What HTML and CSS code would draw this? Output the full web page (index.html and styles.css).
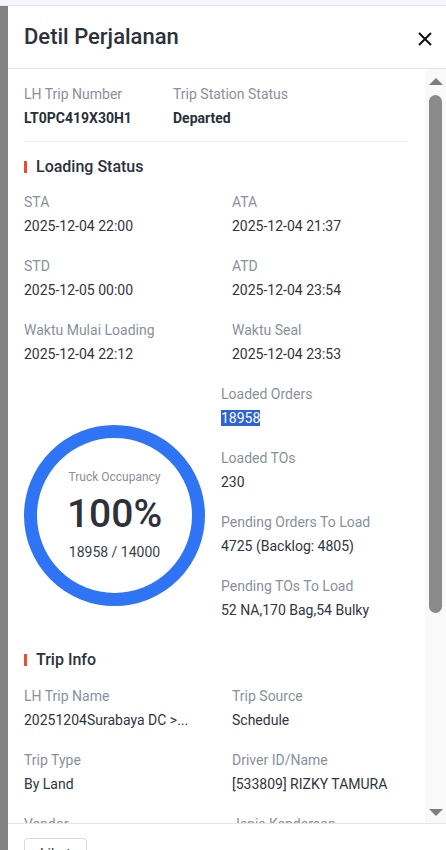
FILE: index.html
```html
<!DOCTYPE html>
<html lang="id">
<head>
<meta charset="utf-8">
<title>Detil Perjalanan</title>
<link rel="stylesheet" href="styles.css">
</head>
<body>
<div class="page">
  <div class="topstrip"></div>
  <div class="main">
    <div class="mask"></div>
    <aside class="drawer">
      <header class="drawer-header">
        <h1 class="drawer-title">Detil Perjalanan</h1>
        <button class="close" aria-label="Tutup">
          <svg width="14" height="14" viewBox="0 0 14 14"><path d="M1 1L13 13M13 1L1 13" stroke="#111" stroke-width="2" stroke-linecap="butt"/></svg>
        </button>
      </header>
      <div class="drawer-body">
        <div class="content">
          <div class="top-row">
            <div class="top-item first">
              <div class="label">LH Trip Number</div>
              <div class="value strong">LT0PC419X30H1</div>
            </div>
            <div class="top-item">
              <div class="label">Trip Station Status</div>
              <div class="value strong">Departed</div>
            </div>
          </div>
          <div class="divider"></div>

          <h2 class="section-title">Loading Status</h2>
          <div class="grid">
            <div class="field"><div class="label">STA</div><div class="value">2025-12-04 22:00</div></div>
            <div class="field"><div class="label">ATA</div><div class="value">2025-12-04 21:37</div></div>
            <div class="field"><div class="label">STD</div><div class="value">2025-12-05 00:00</div></div>
            <div class="field"><div class="label">ATD</div><div class="value">2025-12-04 23:54</div></div>
            <div class="field"><div class="label">Waktu Mulai Loading</div><div class="value">2025-12-04 22:12</div></div>
            <div class="field"><div class="label">Waktu Seal</div><div class="value">2025-12-04 23:53</div></div>
          </div>

          <div class="occupancy">
            <div class="gauge-wrap">
              <div class="gauge">
                <div class="gauge-label">Truck Occupancy</div>
                <div class="gauge-pct">100%</div>
                <div class="gauge-count">18958 / 14000</div>
              </div>
            </div>
            <div class="occ-list">
              <div class="field"><div class="label">Loaded Orders</div><div class="value"><span class="selected">18958</span></div></div>
              <div class="field"><div class="label">Loaded TOs</div><div class="value">230</div></div>
              <div class="field"><div class="label">Pending Orders To Load</div><div class="value">4725 (Backlog: 4805)</div></div>
              <div class="field"><div class="label">Pending TOs To Load</div><div class="value">52 NA,170 Bag,54 Bulky</div></div>
            </div>
          </div>

          <h2 class="section-title second">Trip Info</h2>
          <div class="grid">
            <div class="field"><div class="label">LH Trip Name</div><div class="value">20251204Surabaya DC &gt;...</div></div>
            <div class="field"><div class="label">Trip Source</div><div class="value">Schedule</div></div>
            <div class="field"><div class="label">Trip Type</div><div class="value">By Land</div></div>
            <div class="field"><div class="label">Driver ID/Name</div><div class="value">[533809] RIZKY TAMURA</div></div>
            <div class="field"><div class="label">Vendor</div><div class="value">-</div></div>
            <div class="field"><div class="label">Jenis Kendaraan</div><div class="value">-</div></div>
          </div>
        </div>
        <div class="scrollbar">
          <span class="arrow up"></span>
          <span class="thumb"></span>
          <span class="arrow down"></span>
        </div>
      </div>
      <footer class="drawer-footer">
        <button class="btn">Lihat</button>
      </footer>
    </aside>
  </div>
</div>
</body>
</html>
```

FILE: styles.css
```css
* { box-sizing: border-box; }

html, body {
  margin: 0;
  padding: 0;
  width: 446px;
  height: 850px;
  overflow: hidden;
  background: #ffffff;
  font-family: Roboto, "Noto Sans", "Liberation Sans", sans-serif;
}

.page {
  width: 446px;
  height: 850px;
  display: flex;
  flex-direction: column;
  overflow: hidden;
}

.topstrip {
  flex: none;
  height: 6px;
  background: #f5f5fb;
  border-bottom: 1px solid #e6e6ee;
}

.main {
  flex: 1;
  display: flex;
  min-height: 0;
}

.mask {
  flex: none;
  width: 8px;
  background: #838383;
}

.drawer {
  flex: 1;
  display: flex;
  flex-direction: column;
  background: #ffffff;
  min-width: 0;
}

.drawer-header {
  flex: none;
  height: 63px;
  border-bottom: 1px solid #e4e6ee;
  display: flex;
  align-items: center;
  justify-content: space-between;
  padding: 0 14px 0 16px;
}

.drawer-title {
  margin: 0;
  font-size: 22px;
  font-weight: 500;
  color: #2c313b;
  line-height: 30px;
}

.close {
  border: 0;
  background: transparent;
  padding: 0;
  width: 14px;
  height: 14px;
  margin-top: 4px;
  display: flex;
}

.drawer-body {
  flex: none;
  height: 754px;
  display: flex;
}

.content {
  flex: 1;
  min-width: 0;
  overflow: hidden;
  padding: 14px 17px 0 16px;
}

.scrollbar {
  flex: none;
  width: 21px;
  background: #f9f9f9;
  display: flex;
  flex-direction: column;
  align-items: center;
  padding: 9px 0 7px 0;
}

.arrow {
  width: 0;
  height: 0;
  border-left: 7px solid transparent;
  border-right: 7px solid transparent;
}

.arrow.up { border-bottom: 7px solid #7d7d7d; }
.arrow.down { border-top: 7px solid #7d7d7d; margin-top: auto; }

.thumb {
  margin-top: 10px;
  width: 13px;
  height: 518px;
  border-radius: 7px;
  background: #8a8a8a;
}

.label {
  font-size: 14px;
  line-height: 22px;
  color: #8a909b;
  white-space: nowrap;
}

.value {
  font-size: 14px;
  line-height: 22px;
  margin-top: 2px;
  color: #30353f;
  white-space: nowrap;
}

.value.strong {
  font-size: 14px;
  font-weight: 700;
  color: #2a2f38;
}

.top-row {
  display: flex;
}

.top-item.first {
  width: 149px;
}

.divider {
  height: 1px;
  background: #ececec;
  margin-top: 12px;
}

.section-title {
  margin: 13px 0 12px 0;
  font-size: 16px;
  line-height: 24px;
  font-weight: 500;
  color: #2c313b;
  display: flex;
  align-items: center;
  gap: 9px;
}

.section-title::before {
  content: "";
  width: 3px;
  height: 12px;
  background: #ee4d2d;
}

.section-title.second {
  margin-top: 9px;
  margin-bottom: 13px;
}

.grid {
  display: grid;
  grid-template-columns: 208px 1fr;
}

.field {
  padding-bottom: 18px;
}

.occupancy {
  display: flex;
}

.gauge-wrap {
  flex: none;
  width: 197px;
  padding-top: 42px;
}

.gauge {
  width: 181px;
  height: 181px;
  border-radius: 50%;
  border: 13px solid #2f74f4;
  display: flex;
  flex-direction: column;
  align-items: center;
  justify-content: center;
}

.gauge-label {
  font-size: 12px;
  line-height: 16px;
  color: #8a909b;
}

.gauge-pct {
  margin-top: 7px;
  font-size: 39px;
  font-weight: 500;
  line-height: 44px;
  color: #2c313b;
}

.gauge-count {
  margin-top: 5px;
  font-size: 14px;
  line-height: 22px;
  color: #3a3f48;
}

.occ-list {
  flex: 1;
  min-width: 0;
}

.selected {
  background: #2f63d4;
  color: #ffffff;
}

.drawer-footer {
  flex: none;
  height: 80px;
  border-top: 1px solid #e6e6e6;
  padding: 14px 16px;
}

.btn {
  height: 32px;
  padding: 0 15px;
  border: 1px solid #d9d9d9;
  border-radius: 4px;
  background: #ffffff;
  font-family: Roboto, "Noto Sans", "Liberation Sans", sans-serif;
  font-size: 14px;
  color: #2c313b;
}
```
